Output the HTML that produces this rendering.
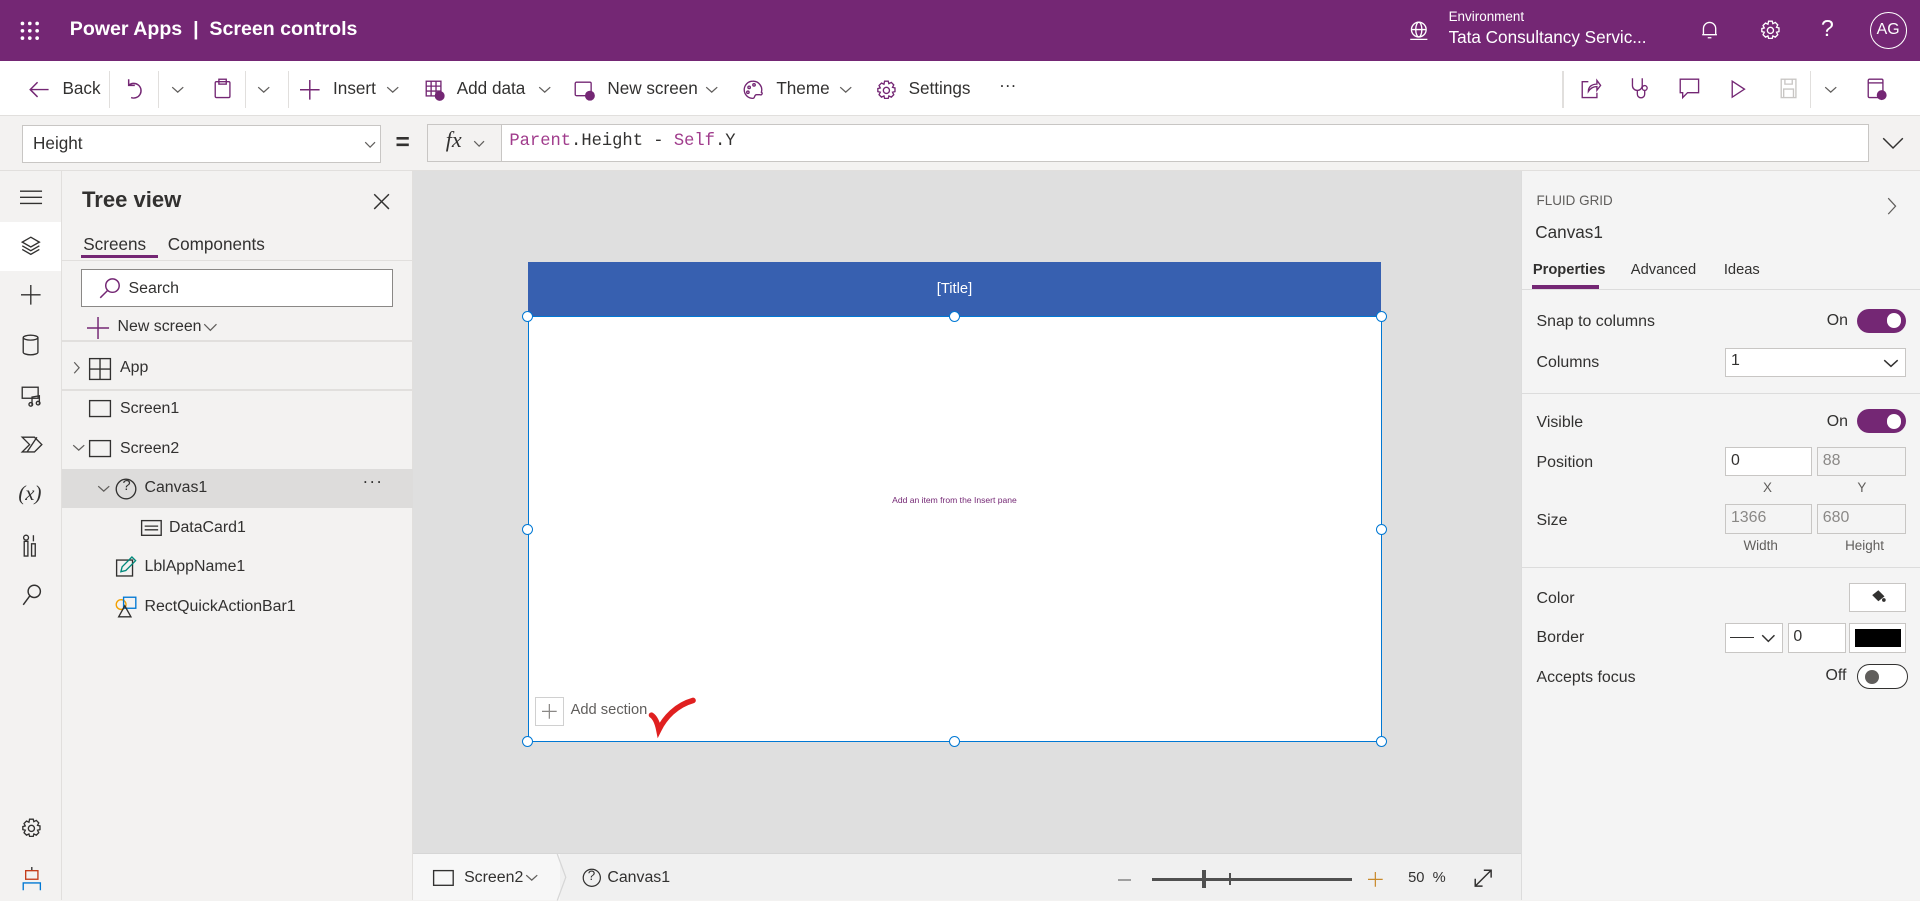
<!DOCTYPE html>
<html><head><meta charset="utf-8"><style>
html{zoom:1.22449}
*{box-sizing:border-box;margin:0;padding:0}
body{width:1568px;height:735px;overflow:hidden;font-family:"Segoe UI","Liberation Sans",sans-serif;font-size:14px;color:#323130;background:#f3f2f1;position:relative}
.a{position:absolute}
svg{position:absolute;overflow:visible}
.hdr{left:0;top:0;width:1568px;height:50px;background:#742774;color:#fff}
.tb{left:0;top:50px;width:1568px;height:45px;background:#fff;border-bottom:1px solid #e1dfdd}
.tb span{position:absolute;top:14px;font-size:14px;color:#323130}
.fb{left:0;top:95px;width:1568px;height:45px;background:#f3f2f1;border-bottom:1px solid #e1dfdd}
.box{background:#fff;border:1px solid #c8c6c4}
.rail{left:0;top:140px;width:51px;height:595px;background:#f3f2f1;border-right:1px solid #e1dfdd}
.tree{left:51px;top:140px;width:286px;height:595px;background:#f3f2f1;border-right:1px solid #e1dfdd}
.cv{left:337px;top:140px;width:905px;height:557px;background:#dfdfdf}
.sb{left:337px;top:697px;width:905px;height:38px;background:#f0f0f0;border-top:1px solid #d6d6d6}
.rp{left:1242px;top:140px;width:326px;height:595px;background:#f4f4f4;border-left:1px solid #dcdcdc}
.rp .l{position:absolute;left:12px;font-size:13px;color:#323130}
.tgl{position:absolute;width:40px;height:20px;border-radius:10px;background:#742774}
.tgl::after{content:"";position:absolute;right:4px;top:4px;width:12px;height:12px;border-radius:50%;background:#fff}
.inp{position:absolute;height:24px;border:1px solid #c8c6c4;background:#fff;font-size:13px;padding:3px 4px;color:#323130}
.inp.d{background:#f4f4f4;color:#8a8886}
.small{position:absolute;font-size:11px;color:#605e5c}
.ti{position:absolute;font-size:13px;color:#323130}
.h{position:absolute;width:9px;height:9px;border-radius:50%;border:1px solid #0078d4;background:#fff}
</style></head><body>

<div class="a hdr">
 <svg style="left:16px;top:17px" width="16" height="16"><g fill="#fff"><circle cx="2" cy="2" r="1.5"/><circle cx="8" cy="2" r="1.5"/><circle cx="14" cy="2" r="1.5"/><circle cx="2" cy="8" r="1.5"/><circle cx="8" cy="8" r="1.5"/><circle cx="14" cy="8" r="1.5"/><circle cx="2" cy="14" r="1.5"/><circle cx="8" cy="14" r="1.5"/><circle cx="14" cy="14" r="1.5"/></g></svg>
 <div class="a" style="left:57px;top:15px;font-size:16px;font-weight:600">Power Apps &nbsp;|&nbsp; Screen controls</div>
 <svg style="left:1151px;top:17px" width="16" height="16" fill="none" stroke="#fff" stroke-width="1.1"><circle cx="8" cy="7" r="6"/><ellipse cx="8" cy="7" rx="2.5" ry="6"/><path d="M2 7h12M1 15h14"/></svg>
 <div class="a" style="left:1183px;top:7px;font-size:11px">Environment</div>
 <div class="a" style="left:1183px;top:22px;font-size:14px">Tata Consultancy Servic...</div>
 <svg style="left:1389px;top:16px" width="14" height="16" fill="none" stroke="#fff" stroke-width="1.1"><path d="M2 12V7a5 5 0 0 1 10 0v5H1h12M5.5 14.5h3"/></svg>
 <svg style="left:1437px;top:16px" width="17" height="17" fill="none" stroke="#fff" stroke-width="1.1"><circle cx="8.5" cy="8.5" r="2.5"/><path d="M7 1h3l.5 2 2-1 2 2-1 2 2 .5v3l-2 .5 1 2-2 2-2-1-.5 2H7l-.5-2-2 1-2-2 1-2-2-.5V7l2-.5-1-2 2-2 2 1z"/></svg>
 <div class="a" style="left:1487px;top:12px;font-size:19px;font-weight:300">?</div>
 <div class="a" style="left:1527px;top:10px;width:30px;height:30px;border:1px solid #fff;border-radius:50%;font-size:13px;text-align:center;line-height:28px">AG</div>
</div>

<div class="a tb">
 <svg style="left:24px;top:16px" width="16" height="14" fill="none" stroke="#742774" stroke-width="1.2"><path d="M7 1L1 7l6 6M1 7h15"/></svg>
 <span style="left:51px">Back</span>
 <div class="a" style="left:89px;top:8px;width:1px;height:30px;background:#e1dfdd"></div>
 <svg style="left:102px;top:14px" width="14" height="17" fill="none" stroke="#742774" stroke-width="1.2"><path d="M3 1v5h5M3 6a6 6 0 1 1 2 10"/></svg>
 <div class="a" style="left:129px;top:8px;width:1px;height:30px;background:#e1dfdd"></div>
 <svg style="left:140px;top:20px" width="11" height="6" fill="none" stroke="#605e5c"><path d="M1 1l4.5 4 4.5-4"/></svg>
 <svg style="left:175px;top:14px" width="14" height="17" fill="none" stroke="#742774" stroke-width="1.1"><rect x="1" y="3" width="12" height="13" rx="1"/><rect x="4" y="1" width="6" height="4"/></svg>
 <div class="a" style="left:200px;top:8px;width:1px;height:30px;background:#e1dfdd"></div>
 <svg style="left:210px;top:20px" width="11" height="6" fill="none" stroke="#605e5c"><path d="M1 1l4.5 4 4.5-4"/></svg>
 <div class="a" style="left:235px;top:8px;width:1px;height:30px;background:#e1dfdd"></div>
 <svg style="left:245px;top:15px" width="16" height="16" fill="none" stroke="#742774" stroke-width="1.2"><path d="M8 0v16M0 8h16"/></svg>
 <span style="left:272px">Insert</span>
 <svg style="left:315px;top:20px" width="11" height="6" fill="none" stroke="#605e5c"><path d="M1 1l4.5 4 4.5-4"/></svg>
 <svg style="left:347px;top:15px" width="16" height="17" fill="none" stroke="#742774" stroke-width="1.1"><rect x="1" y="1" width="12" height="12"/><path d="M1 5h12M1 9h12M5 1v12M9 1v12"/><circle cx="12" cy="13" r="3.5" fill="#742774"/></svg>
 <span style="left:373px">Add data</span>
 <svg style="left:439px;top:20px" width="11" height="6" fill="none" stroke="#605e5c"><path d="M1 1l4.5 4 4.5-4"/></svg>
 <svg style="left:469px;top:16px" width="17" height="16" fill="none" stroke="#742774" stroke-width="1.1"><rect x="1" y="1" width="13" height="11" rx="1"/><circle cx="13" cy="12" r="3.5" fill="#742774"/></svg>
 <span style="left:496px">New screen</span>
 <svg style="left:576px;top:20px" width="11" height="6" fill="none" stroke="#605e5c"><path d="M1 1l4.5 4 4.5-4"/></svg>
 <svg style="left:607px;top:15px" width="17" height="16" fill="none" stroke="#742774" stroke-width="1.1"><path d="M8 1a7 7 0 1 0 0 14c2 0 1-3 3-3h3a1 1 0 0 0 1-2 7 7 0 0 0-7-9z"/><circle cx="5" cy="6" r="1"/><circle cx="9" cy="4" r="1"/><circle cx="4" cy="10" r="1"/></svg>
 <span style="left:634px">Theme</span>
 <svg style="left:685px;top:20px" width="11" height="6" fill="none" stroke="#605e5c"><path d="M1 1l4.5 4 4.5-4"/></svg>
 <svg style="left:715px;top:15px" width="17" height="17" fill="none" stroke="#742774" stroke-width="1.1"><circle cx="8.5" cy="8.5" r="2.5"/><path d="M7 1h3l.5 2 2-1 2 2-1 2 2 .5v3l-2 .5 1 2-2 2-2-1-.5 2H7l-.5-2-2 1-2-2 1-2-2-.5V7l2-.5-1-2 2-2 2 1z"/></svg>
 <span style="left:742px">Settings</span>
 <span style="left:816px;top:11px">···</span>
 <div class="a" style="left:1276px;top:8px;width:1px;height:30px;background:#e1dfdd"></div>
 <svg style="left:1291px;top:14px" width="16" height="17" fill="none" stroke="#742774" stroke-width="1.1"><path d="M6 3H1v13h12v-4M6 11c0-4 3-6 7-6V2l3 4-3 4V7c-3 0-5 1-7 4z"/></svg>
 <svg style="left:1331px;top:13px" width="16" height="19" fill="none" stroke="#742774" stroke-width="1.1"><path d="M2 1v6a4 4 0 0 0 8 0V1M6 11v3a3 3 0 0 0 6 0v-3"/><circle cx="12" cy="9" r="2"/></svg>
 <svg style="left:1371px;top:14px" width="17" height="17" fill="none" stroke="#742774" stroke-width="1.1"><path d="M1 1h15v11H7l-4 4v-4H1z"/></svg>
 <svg style="left:1414px;top:15px" width="12" height="15" fill="none" stroke="#742774" stroke-width="1.1"><path d="M1 1l10 6.5L1 14z"/></svg>
 <svg style="left:1454px;top:14px" width="14" height="17" fill="none" stroke="#c8c6c4" stroke-width="1.1"><rect x="1" y="1" width="12" height="15"/><path d="M4 1v4h6V1M3 16V9h8v7"/></svg>
 <div class="a" style="left:1478px;top:8px;width:1px;height:30px;background:#e1dfdd"></div>
 <svg style="left:1490px;top:20px" width="11" height="6" fill="none" stroke="#605e5c"><path d="M1 1l4.5 4 4.5-4"/></svg>
 <svg style="left:1525px;top:14px" width="16" height="18" fill="none" stroke="#742774" stroke-width="1.1"><rect x="1" y="1" width="12" height="15" rx="1"/><path d="M1 4h12"/><circle cx="12" cy="14" r="3.5" fill="#742774"/></svg>
</div>

<div class="a fb">
 <div class="a box" style="left:18px;top:7px;width:293px;height:31px"></div>
 <div class="a" style="left:27px;top:14px;font-size:14px">Height</div>
 <svg style="left:297px;top:20px" width="10" height="6" fill="none" stroke="#605e5c"><path d="M1 1l4 4 4-4"/></svg>
 <div class="a" style="left:323px;top:10px;font-size:20px;font-weight:bold">=</div>
 <div class="a" style="left:349px;top:6px;width:1177px;height:31px;background:#fff;border:1px solid #c8c6c4"></div>
 <div class="a" style="left:349px;top:6px;width:61px;height:31px;background:#f3f2f1;border:1px solid #c8c6c4"></div>
 <div class="a" style="left:364px;top:9px;font-family:'Liberation Serif',serif;font-style:italic;font-size:18px">fx</div>
 <svg style="left:386px;top:19px" width="10" height="6" fill="none" stroke="#605e5c"><path d="M1 1l4 4 4-4"/></svg>
 <div class="a" style="left:416px;top:13px;font-family:'Liberation Mono',monospace;font-size:14px;color:#323130"><span style="color:#a03c8c">Parent</span>.Height - <span style="color:#a03c8c">Self</span>.Y</div>
 <svg style="left:1537px;top:17px" width="18" height="10" fill="none" stroke="#323130" stroke-width="1.2"><path d="M1 1l8 8 8-8"/></svg>
</div>

<div class="a rail">
 <svg style="left:16px;top:15px" width="18" height="12" stroke="#323130" stroke-width="1.1"><path d="M0 1h18M0 6h18M0 11h18"/></svg>
 <div class="a" style="left:0;top:41px;width:50px;height:40px;background:#fff"></div>
 <svg style="left:17px;top:53px" width="16" height="16" fill="none" stroke="#323130" stroke-width="1.1"><path d="M8 1l7 4-7 4-7-4zM1 8l7 4 7-4M1 11l7 4 7-4"/></svg>
 <svg style="left:17px;top:93px" width="16" height="16" stroke="#323130" stroke-width="1.1"><path d="M8 0v16M0 8h16"/></svg>
 <svg style="left:18px;top:133px" width="14" height="18" fill="none" stroke="#323130" stroke-width="1.1"><ellipse cx="7" cy="3" rx="6" ry="2"/><path d="M1 3v12c0 1 3 2 6 2s6-1 6-2V3"/></svg>
 <svg style="left:17px;top:175px" width="18" height="17" fill="none" stroke="#323130" stroke-width="1.1"><rect x="1" y="1" width="13" height="9"/><path d="M9 16V9l6-1v7"/><circle cx="8" cy="15" r="1.5"/><circle cx="14" cy="14" r="1.5"/></svg>
 <svg style="left:17px;top:216px" width="18" height="14" fill="none" stroke="#323130" stroke-width="1.1"><path d="M1 1h10l6 6-6 6H1l6-6zM5 13l8-12"/></svg>
 <div class="a" style="left:15px;top:253px;font-family:'Liberation Serif',serif;font-style:italic;font-size:17px">(x)</div>
 <svg style="left:19px;top:296px" width="12" height="19" fill="none" stroke="#323130" stroke-width="1.1"><rect x="1" y="6" width="3" height="12"/><rect x="7" y="8" width="3" height="10"/><circle cx="2.5" cy="3" r="2"/><path d="M8.5 1v5"/></svg>
 <svg style="left:18px;top:337px" width="16" height="18" fill="none" stroke="#323130" stroke-width="1.2"><circle cx="10" cy="6" r="5"/><path d="M6.5 9.5L1 17"/></svg>
 <svg style="left:17px;top:528px" width="17" height="17" fill="none" stroke="#323130" stroke-width="1.1"><circle cx="8.5" cy="8.5" r="2.5"/><path d="M7 1h3l.5 2 2-1 2 2-1 2 2 .5v3l-2 .5 1 2-2 2-2-1-.5 2H7l-.5-2-2 1-2-2 1-2-2-.5V7l2-.5-1-2 2-2 2 1z"/></svg>
 <svg style="left:18px;top:568px" width="16" height="20" fill="none" stroke-width="1.1"><path d="M8 0v3" stroke="#323130"/><rect x="3" y="3" width="10" height="7" stroke="#c43e1c"/><path d="M1 19v-6h14v6" stroke="#0078d4"/></svg>
</div>

<div class="a tree">
 <div class="a" style="left:16px;top:13px;font-size:18px;font-weight:600;color:#323130">Tree view</div>
 <svg style="left:254px;top:18px" width="14" height="14" stroke="#323130" stroke-width="1.2"><path d="M1 1l12 12M13 1L1 13"/></svg>
 <div class="a" style="left:17px;top:51px;font-size:14px">Screens</div>
 <div class="a" style="left:15px;top:68px;width:63px;height:3px;background:#742774"></div>
 <div class="a" style="left:86px;top:51px;font-size:14px">Components</div>
 <div class="a" style="left:0;top:72px;width:286px;height:1px;background:#e1dfdd"></div>
 <div class="a box" style="left:15px;top:80px;width:255px;height:31px;border-color:#8a8886"></div>
 <svg style="left:30px;top:86px" width="18" height="18" fill="none" stroke="#742774" stroke-width="1.2"><circle cx="11" cy="7" r="5.5"/><path d="M7 11l-6 6"/></svg>
 <div class="a" style="left:54px;top:89px;font-size:13px;color:#323130">Search</div>
 <svg style="left:20px;top:119px" width="18" height="18" stroke="#742774" stroke-width="1.2"><path d="M9 0v18M0 9h18"/></svg>
 <div class="a" style="left:45px;top:120px;font-size:13px">New screen</div>
 <svg style="left:115px;top:124px" width="12" height="7" fill="none" stroke="#605e5c"><path d="M1 1l5 5 5-5"/></svg>
 <div class="a" style="left:0;top:138px;width:286px;height:1px;background:#e1dfdd"></div>
 <svg style="left:9px;top:155px" width="6" height="11" fill="none" stroke="#605e5c"><path d="M1 1l4 4.5L1 10"/></svg>
 <svg style="left:22px;top:152px" width="18" height="18" fill="none" stroke="#323130" stroke-width="1.1"><rect x=".5" y=".5" width="17" height="17"/><path d="M9 .5v17M.5 9h17M9 .5"/></svg>
 <div class="ti" style="left:47px;top:153px">App</div>
 <div class="a" style="left:0;top:178px;width:286px;height:1px;background:#e1dfdd"></div>
 <svg style="left:22px;top:187px" width="18" height="14" fill="none" stroke="#323130" stroke-width="1.1"><rect x=".5" y=".5" width="17" height="13"/></svg>
 <div class="ti" style="left:47px;top:187px">Screen1</div>
 <svg style="left:8px;top:223px" width="11" height="6" fill="none" stroke="#605e5c"><path d="M1 1l4.5 4 4.5-4"/></svg>
 <svg style="left:22px;top:219px" width="18" height="14" fill="none" stroke="#323130" stroke-width="1.1"><rect x=".5" y=".5" width="17" height="13"/></svg>
 <div class="ti" style="left:47px;top:219px">Screen2</div>
 <div class="a" style="left:0;top:243px;width:286px;height:32px;background:#dddcdb"></div>
 <svg style="left:28px;top:256px" width="11" height="6" fill="none" stroke="#605e5c"><path d="M1 1l4.5 4 4.5-4"/></svg>
 <svg style="left:43px;top:250px" width="18" height="18" fill="none" stroke="#323130" stroke-width="1.1"><circle cx="9" cy="9" r="8"/></svg>
 <div class="a" style="left:49px;top:250px;font-size:12px">?</div>
 <div class="ti" style="left:67px;top:251px">Canvas1</div>
 <div class="a" style="left:245px;top:245px;font-size:14px;letter-spacing:1px">···</div>
 <svg style="left:64px;top:285px" width="17" height="13" fill="none" stroke="#323130" stroke-width="1.1"><rect x=".5" y=".5" width="16" height="12"/><path d="M3 5h11M3 8h11"/></svg>
 <div class="ti" style="left:87px;top:284px">DataCard1</div>
 <svg style="left:44px;top:315px" width="16" height="16" fill="none" stroke-width="1.1"><rect x=".5" y="2.5" width="13" height="13" stroke="#323130"/><path d="M4 12l1-4 8-8 3 3-8 8z" stroke="#00897b"/></svg>
 <div class="ti" style="left:67px;top:316px">LblAppName1</div>
 <svg style="left:43px;top:347px" width="18" height="18" fill="none" stroke-width="1.1"><circle cx="5" cy="7" r="4" stroke="#f2a000"/><rect x="7" y="1" width="10" height="9" stroke="#0078d4"/><path d="M3 17l5-9 5 9z" stroke="#323130"/></svg>
 <div class="ti" style="left:67px;top:348px">RectQuickActionBar1</div>
</div>

<div class="a cv">
 <div class="a" style="left:94px;top:74px;width:697px;height:45px;background:#3760b0;color:#fff;font-size:12px;text-align:center;line-height:45px">[Title]</div>
 <div class="a" style="left:94px;top:118px;width:698px;height:348px;background:#fff;border:1px solid #0078d4"></div>
 <div class="a" style="left:94px;top:264px;width:697px;text-align:center;font-size:7px;color:#742774">Add an item from the Insert pane</div>
 <div class="a" style="left:100px;top:429px;width:24px;height:24px;border:1px solid #d0d0d0;background:#fff"></div>
 <svg style="left:106px;top:435px" width="12" height="12" stroke="#8a8886"><path d="M6 0v12M0 6h12"/></svg>
 <div class="a" style="left:129px;top:433px;font-size:12px;color:#605e5c">Add section</div>
 <svg style="left:193px;top:430px" width="40" height="30" fill="none" stroke="#e02020" stroke-width="4.5" stroke-linecap="round"><path d="M2 14c3 2 5 7 6 12C13 16 22 6 36 2"/></svg>
 <div class="h" style="left:89.5px;top:114px"></div><div class="h" style="left:438px;top:114px"></div><div class="h" style="left:786.5px;top:114px"></div>
 <div class="h" style="left:89.5px;top:288px"></div><div class="h" style="left:786.5px;top:288px"></div>
 <div class="h" style="left:89.5px;top:461px"></div><div class="h" style="left:438px;top:461px"></div><div class="h" style="left:786.5px;top:461px"></div>
</div>

<div class="a sb">
 <div class="a" style="left:0;top:0;width:120px;height:37px;background:#f7f7f7"></div>
 <svg style="left:17px;top:13px" width="17" height="13" fill="none" stroke="#323130" stroke-width="1.1"><rect x=".5" y=".5" width="16" height="12"/></svg>
 <div class="a" style="left:42px;top:12px;font-size:13px">Screen2</div>
 <svg style="left:92px;top:16px" width="11" height="6" fill="none" stroke="#605e5c"><path d="M1 1l4.5 4 4.5-4"/></svg>
 <svg style="left:117px;top:0" width="10" height="38" fill="none" stroke="#d6d6d6"><path d="M1 0l7 19-7 19"/></svg>
 <svg style="left:138px;top:11px" width="16" height="16" fill="none" stroke="#323130"><circle cx="8" cy="8" r="7"/></svg>
 <div class="a" style="left:143px;top:11px;font-size:11px">?</div>
 <div class="a" style="left:159px;top:12px;font-size:13px">Canvas1</div>
 <div class="a" style="left:576px;top:20px;width:11px;height:1.5px;background:#a0a0a0"></div>
 <div class="a" style="left:604px;top:19px;width:163px;height:3px;background:#505050"></div>
 <div class="a" style="left:645px;top:13px;width:3px;height:14px;background:#505050"></div>
 <div class="a" style="left:667px;top:15px;width:1px;height:10px;background:#505050"></div>
 <svg style="left:780px;top:14px" width="12" height="12" stroke="#c88a2c"><path d="M6 0v12M0 6h12"/></svg>
 <div class="a" style="left:813px;top:13px;font-size:12px">50 &nbsp;%</div>
 <svg style="left:867px;top:12px" width="15" height="15" fill="none" stroke="#323130" stroke-width="1.2"><path d="M1 14L14 1M8 1h6v6M1 8v6h6"/></svg>
</div>

<div class="a rp">
 <div class="a" style="left:12px;top:18px;font-size:11px;color:#605e5c">FLUID GRID</div>
 <svg style="left:298px;top:21px" width="8" height="15" fill="none" stroke="#605e5c"><path d="M1 1l6 6.5L1 14"/></svg>
 <div class="a" style="left:11px;top:41px;font-size:14px">Canvas1</div>
 <div class="a" style="left:9px;top:74px;font-size:12px;font-weight:bold">Properties</div>
 <div class="a" style="left:8px;top:93px;width:55px;height:3px;background:#742774"></div>
 <div class="a" style="left:89px;top:74px;font-size:12px">Advanced</div>
 <div class="a" style="left:165px;top:74px;font-size:12px">Ideas</div>
 <div class="a" style="left:0;top:96px;width:326px;height:1px;background:#dcdcdc"></div>
 <div class="l" style="top:116px">Snap to columns</div>
 <div class="a" style="left:249px;top:115px;font-size:13px">On</div>
 <div class="tgl" style="left:274px;top:112px"></div>
 <div class="inp" style="left:166px;top:144px;width:148px;height:24px">1</div>
 <svg style="left:295px;top:153px" width="13" height="7" fill="none" stroke="#323130" stroke-width="1.2"><path d="M1 1l5.5 5L12 1"/></svg>
 <div class="l" style="top:149px">Columns</div>
 <div class="a" style="left:0;top:181px;width:326px;height:1px;background:#dcdcdc"></div>
 <div class="l" style="top:198px">Visible</div>
 <div class="a" style="left:249px;top:197px;font-size:13px">On</div>
 <div class="tgl" style="left:274px;top:194px"></div>
 <div class="l" style="top:231px">Position</div>
 <div class="inp" style="left:166px;top:225px;width:71px;height:24px">0</div>
 <div class="inp d" style="left:241px;top:225px;width:73px;height:24px">88</div>
 <div class="small" style="left:197px;top:252px">X</div>
 <div class="small" style="left:274px;top:252px">Y</div>
 <div class="l" style="top:278px">Size</div>
 <div class="inp d" style="left:166px;top:272px;width:71px;height:24px">1366</div>
 <div class="inp d" style="left:241px;top:272px;width:73px;height:24px">680</div>
 <div class="small" style="left:181px;top:299px">Width</div>
 <div class="small" style="left:264px;top:299px">Height</div>
 <div class="a" style="left:0;top:323px;width:326px;height:1px;background:#dcdcdc"></div>
 <div class="l" style="top:342px">Color</div>
 <div class="inp" style="left:267px;top:336px;width:47px;height:24px"></div>
 <svg style="left:285px;top:341px" width="12" height="11" fill="#323130"><path d="M1 5l5-4 5 5-5 4z"/><circle cx="10.5" cy="9" r="1.5"/></svg>
 <div class="l" style="top:374px">Border</div>
 <div class="inp" style="left:166px;top:369px;width:47px;height:24px"></div>
 <div class="a" style="left:170px;top:380px;width:20px;height:1px;background:#323130"></div>
 <svg style="left:195px;top:378px" width="12" height="7" fill="none" stroke="#323130" stroke-width="1.2"><path d="M1 1l5 5 5-5"/></svg>
 <div class="inp" style="left:217px;top:369px;width:48px;height:24px">0</div>
 <div class="inp" style="left:267px;top:369px;width:47px;height:24px"></div>
 <div class="a" style="left:272px;top:374px;width:38px;height:14px;background:#000"></div>
 <div class="l" style="top:406px">Accepts focus</div>
 <div class="a" style="left:248px;top:405px;font-size:13px">Off</div>
 <div class="a" style="left:274px;top:402px;width:41px;height:21px;border:1px solid #323130;border-radius:11px;background:#fff"></div>
 <div class="a" style="left:280px;top:407px;width:12px;height:12px;border-radius:50%;background:#605e5c"></div>
</div>
</body></html>
